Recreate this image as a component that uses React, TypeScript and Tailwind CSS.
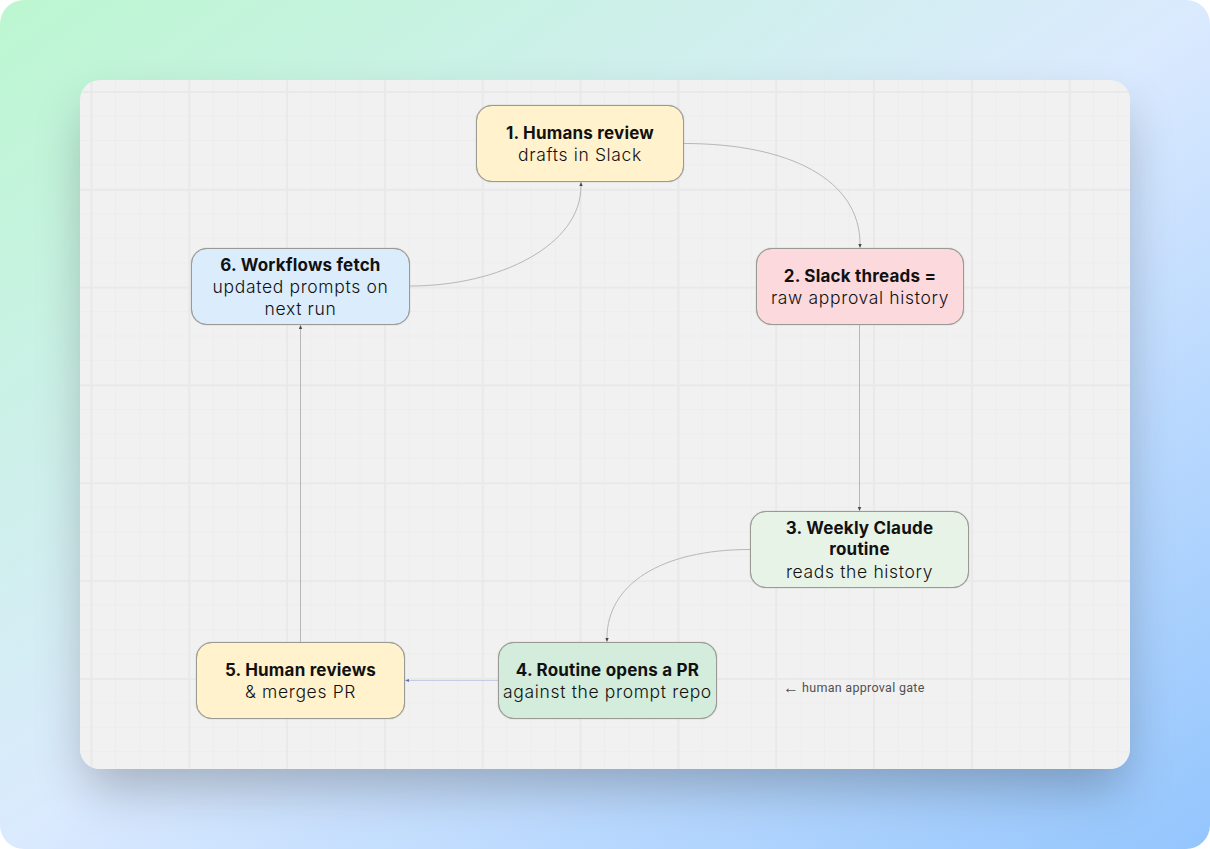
type FlowNode = {
  id: number;
  title: string;
  body: string;
  className: string;
};

const nodes: FlowNode[] = [
  { id: 1, title: "1. Humans review", body: "drafts in Slack", className: "left-[396px] top-[25px] w-[208px] bg-[#fff2cc]" },
  { id: 2, title: "2. Slack threads =", body: "raw approval history", className: "left-[676px] top-[168px] w-[208px] bg-[#fbd9dd]" },
  { id: 3, title: "3. Weekly Claude\nroutine", body: "reads the history", className: "left-[670px] top-[431px] w-[219px] bg-[#e8f3e8]" },
  { id: 4, title: "4. Routine opens a PR", body: "against the prompt repo", className: "left-[418px] top-[562px] w-[219px] bg-[#d3ecdb]" },
  { id: 5, title: "5. Human reviews", body: "& merges PR", className: "left-[116px] top-[562px] w-[209px] bg-[#fff2cc]" },
  { id: 6, title: "6. Workflows fetch", body: "updated prompts on\nnext run", className: "left-[111px] top-[168px] w-[219px] bg-[#dbecfd]" },
];

const Connectors = () => (
  <svg className="absolute inset-0 h-full w-full" viewBox="0 0 1050 689" fill="none">
    <g stroke="#b0b0b0" strokeWidth="0.9">
      <path d="M604 63.5 C 710 63.5 780 100 780 164" />
      <path d="M330 206 C 420 206 501 165 501 106" />
      <path d="M670 469.5 C 580 469.5 527 505 527 558" />
      <path d="M779.5 245 V 427" />
      <path d="M220.5 562 V 249" />
    </g>
    <path d="M418 600.5 H 327" stroke="#c3cde4" strokeWidth="1.2" />
    <g fill="#4a4a4a">
      <path d="M780 168 L778.3 164 H781.7 Z" />
      <path d="M501 102 L499.3 106 H502.7 Z" />
      <path d="M527 562 L525.3 558 H528.7 Z" />
      <path d="M779.5 431 L777.8 427 H781.2 Z" />
      <path d="M220.5 245 L218.8 249 H222.2 Z" />
    </g>
    <path d="M325 600.5 L329 599 V602 Z" fill="#5b78b0" />
  </svg>
);

export default function App() {
  return (
    <div className="h-[849px] w-[1210px] overflow-hidden bg-white">
      <div className="flex h-full w-full items-start rounded-[24px] bg-gradient-to-br from-[#bbf7d0] via-[#dbeafe] to-[#93c5fd] px-[80px] py-[80px]">
        <div className="relative h-[689px] w-[1050px] overflow-hidden rounded-[20px] shadow-[0_25px_50px_-6px_rgba(0,0,0,0.25)]">
          <div className="absolute inset-0 bg-[#f1f1f1] bg-[linear-gradient(to_right,#e9e9e9_1.5px,transparent_1.5px),linear-gradient(to_bottom,#e9e9e9_1.5px,transparent_1.5px),linear-gradient(to_right,#ededed_1.2px,transparent_1.2px),linear-gradient(to_bottom,#ededed_1.2px,transparent_1.2px)] bg-[size:97.83px_97.83px,97.83px_97.83px,24.46px_24.46px,24.46px_24.46px] bg-[position:10.5px_11px,10.5px_11px,10.5px_11px,10.5px_11px]" />
          <Connectors />
          {nodes.map((node) => (
            <div
              key={node.id}
              className={`absolute flex h-[77px] flex-col items-center justify-center whitespace-pre-line rounded-[16px] border-[1.5px] border-[#9a9a95] pt-px text-center font-['Inter',sans-serif] text-[17px] leading-[21.5px] text-[#111111] shadow-[0_0_1px_#8a8a85] ${node.className}`}
            >
              <span className="font-bold tracking-[0.2px]">{node.title}</span>
              <span className="text-[17.5px] font-[350] tracking-[0.65px]">{node.body}</span>
            </div>
          ))}
          <div className="absolute left-[703px] top-[600px] flex items-center gap-[3px] font-['Roboto',sans-serif] text-[12.5px] leading-[16px] tracking-[0.3px] text-[#505050]">
            <span className="text-[16px] leading-[16px] tracking-normal">←</span>
            <span>human approval gate</span>
          </div>
        </div>
      </div>
    </div>
  );
}
